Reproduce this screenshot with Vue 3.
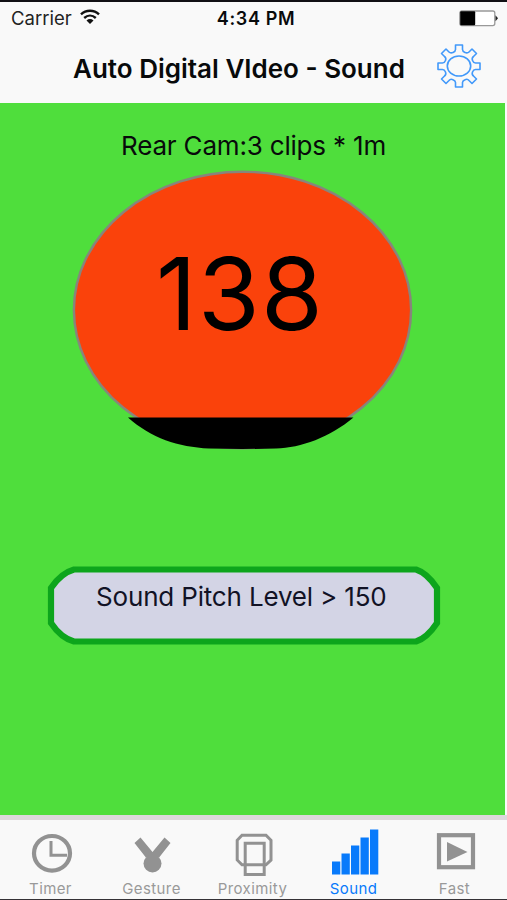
<script setup>
const tabs = [
  { id: 'timer', label: 'Timer' },
  { id: 'gesture', label: 'Gesture' },
  { id: 'proximity', label: 'Proximity' },
  { id: 'sound', label: 'Sound', active: true },
  { id: 'fast', label: 'Fast' },
]
</script>

<template>
  <div class="screen">
    <header class="top">
      <div class="status">
        <div class="network">
          <span class="carrier">Carrier</span>
          <svg class="wifi" width="20" height="16" viewBox="0 0 20 16" fill="none" stroke="#111" stroke-width="2.4">
            <path d="M1 5.4C6 .5 14 .5 19 5.4M4.2 9C7.7 5.8 12.3 5.8 15.8 9" />
            <path d="M6.5 11.5C8.7 9.6 11.3 9.6 13.5 11.5L10 15Z" fill="#111" stroke="none" />
          </svg>
        </div>
        <time class="time">4:34 PM</time>
        <svg class="battery" width="39" height="17" viewBox="0 0 39 17">
          <rect x=".8" y="1" width="35" height="14.6" rx="2" fill="#fff" stroke="#999" stroke-width="1.3" />
          <rect x="1.2" y="1.3" width="15" height="14" rx="1" fill="#000" />
          <path d="M36.5 5.3L39 8.3L36.5 11.3Z" fill="#222" />
        </svg>
      </div>
      <div class="nav">
        <h1 class="title">Auto Digital VIdeo - Sound</h1>
        <svg class="gear" width="44" height="44" viewBox="0 0 44 44" fill="none" stroke="#4299fa" stroke-width="1.6" stroke-linejoin="round">
          <path d="M18.5 1H25.5V5.5Q25.5 7.5 28 8.5Q30.5 9.5 32 8L35 5L39.5 9.5L36.5 12.5Q34.5 14 35.5 16.5Q36.5 19 38.5 19H43V25.5H38.5Q36.5 25.5 35.5 28Q34.5 30.5 36.5 32L39.5 35L35 39.5L32 36.5Q30.5 34.5 28 35.7Q25.5 36.7 25.5 38.5V43H18.5V38.5Q18.5 36.7 16 35.7Q13.5 34.5 12 36.5L9 39.5L4.5 35L7.5 32Q9.5 30.5 8.5 28Q7.5 25.5 5.5 25.5H1V19H5.5Q7.5 19 8.5 16.5Q9.5 14 7.5 12.5L4.5 9.5L9 5L12 8Q13.5 9.5 16 8.5Q18.5 7.5 18.5 5.5Z" />
          <ellipse cx="22" cy="22" rx="11.7" ry="10" />
        </svg>
      </div>
    </header>

    <main class="content">
      <p class="camera">Rear Cam:3 clips * 1m</p>
      <div class="dial">
        <svg width="341" height="280" viewBox="0 0 341 280">
          <ellipse cx="170.5" cy="140" rx="168.6" ry="138.3" fill="#fa420b" stroke="#88857c" stroke-width="2.4" />
          <path d="M56 247.5H281.5C258 267 229 278 204 278.5Q170 279.4 137 278.5C106 277 79 268 56 247.5Z" fill="#000" />
        </svg>
        <span class="reading">138</span>
      </div>
      <div class="level">
        <svg width="394" height="79" viewBox="0 0 394 79">
          <path d="M27 3.5H369C377 6 384 13 390 22V57C384 66 377 73 369 75.5H27C18 73 10 66 4 57V22C10 13 18 6 27 3.5Z" fill="#d3d4e5" stroke="#0da51c" stroke-width="6.2" />
        </svg>
        <span class="level-text">Sound Pitch Level &gt; 150</span>
      </div>
    </main>

    <nav class="tabs">
      <a v-for="tab in tabs" :key="tab.id" class="tab" :class="[tab.id, { active: tab.active }]">
        <svg class="icon" width="50" height="50" viewBox="0 0 50 50">
          <g v-if="tab.id === 'timer'" fill="none" stroke="#929292">
            <ellipse cx="26" cy="25.3" rx="18" ry="17.3" stroke-width="4.2" />
            <path d="M25 13V27.2H41" stroke-width="3" />
          </g>
          <g v-else-if="tab.id === 'gesture'" fill="#929292">
            <path d="M7.5 15L13.5 9.5L25.5 24L37.5 9.5L43.5 15L32.5 29H18.5Z" />
            <ellipse cx="25.5" cy="35.5" rx="9" ry="9" />
          </g>
          <g v-else-if="tab.id === 'proximity'" fill="none" stroke="#929292" stroke-width="3">
            <path d="M14 7.3H38L43 12.3V32L38 36.8H14L9.2 32V12.3Z" />
            <path d="M17.2 15.2H36.2V46.5H17.2Z" />
          </g>
          <g v-else-if="tab.id === 'sound'" fill="#087afb">
            <rect x="3" y="33.5" width="8.3" height="13" />
            <rect x="12.5" y="25.5" width="8.3" height="21" />
            <rect x="22" y="17.5" width="8.3" height="29" />
            <rect x="31.5" y="9.5" width="8.3" height="37" />
            <rect x="41" y="1.5" width="8.3" height="45" />
          </g>
          <g v-else>
            <rect x="9" y="7.2" width="34" height="32" fill="none" stroke="#929292" stroke-width="4.2" />
            <path d="M17 14V33.5L37.5 24Z" fill="#929292" />
          </g>
        </svg>
        <span class="label">{{ tab.label }}</span>
      </a>
    </nav>
  </div>
</template>

<style>
body { margin: 0; background: #f9f9f9; }
</style>

<style scoped>
.screen {
  box-sizing: border-box;
  width: 507px;
  height: 900px;
  display: flex;
  flex-direction: column;
  overflow: hidden;
  background: #f9f9f9;
  border-top: 2px solid #111014;
  border-bottom: 1px solid #353236;
  font-family: Inter, "Liberation Sans", sans-serif;
  color: #080a0b;
}
.top { height: 101px; flex: none; }
.status {
  height: 32px;
  display: grid;
  grid-template-columns: 1fr auto 1fr;
  align-items: center;
  padding: 0 9px 0 11px;
  box-sizing: border-box;
}
.network { display: flex; align-items: center; gap: 8px; }
.wifi { margin-bottom: 2px; }
.carrier { font-size: 18.5px; line-height: 32px; color: #222; }
.time { padding: 2px 0 0 3px; font-size: 18px; line-height: 30px; font-weight: 600; letter-spacing: .65px; }
.battery { justify-self: end; }
.nav { display: flex; align-items: center; height: 64px; padding-left: 73px; }
.title { margin: 0; padding-top: 5px; width: 364px; font-size: 26px; line-height: 59px; font-weight: 600; white-space: nowrap; }
.gear { flex: none; }
.content {
  width: 505px;
  height: 711.5px;
  flex: none;
  display: flex;
  flex-direction: column;
  background: #4fde3c;
}
.camera { margin: 26px 0 0 121px; height: 41px; font-size: 26px; line-height: 34px; letter-spacing: -.18px; white-space: nowrap; }
.dial { width: 341px; height: 280px; margin-left: 72px; display: grid; }
.dial > *, .level > * { grid-area: 1 / 1; }
.reading { z-index: 1; margin: 72px 0 0 84px; font-size: 100px; line-height: 104px; letter-spacing: 1.3px; color: #000; }
.level { width: 394px; height: 79px; margin: 116px 0 0 47px; display: grid; }
.level-text { z-index: 1; margin: 14px 0 0 49px; font-size: 26px; line-height: 34px; letter-spacing: -.17px; white-space: nowrap; color: #111225; }
.tabs {
  flex: 1;
  display: grid;
  grid-template-columns: repeat(5, 101px);
  border-top: 5px solid #dcd8dc;
  overflow: hidden;
}
.tab { display: flex; flex-direction: column; align-items: center; padding-top: 8px; color: #999; }
.icon { flex: none; }
.label { padding-top: 1px; font-size: 15px; line-height: 20px; letter-spacing: .4px; }
.active .label { color: #087afb; }
</style>
